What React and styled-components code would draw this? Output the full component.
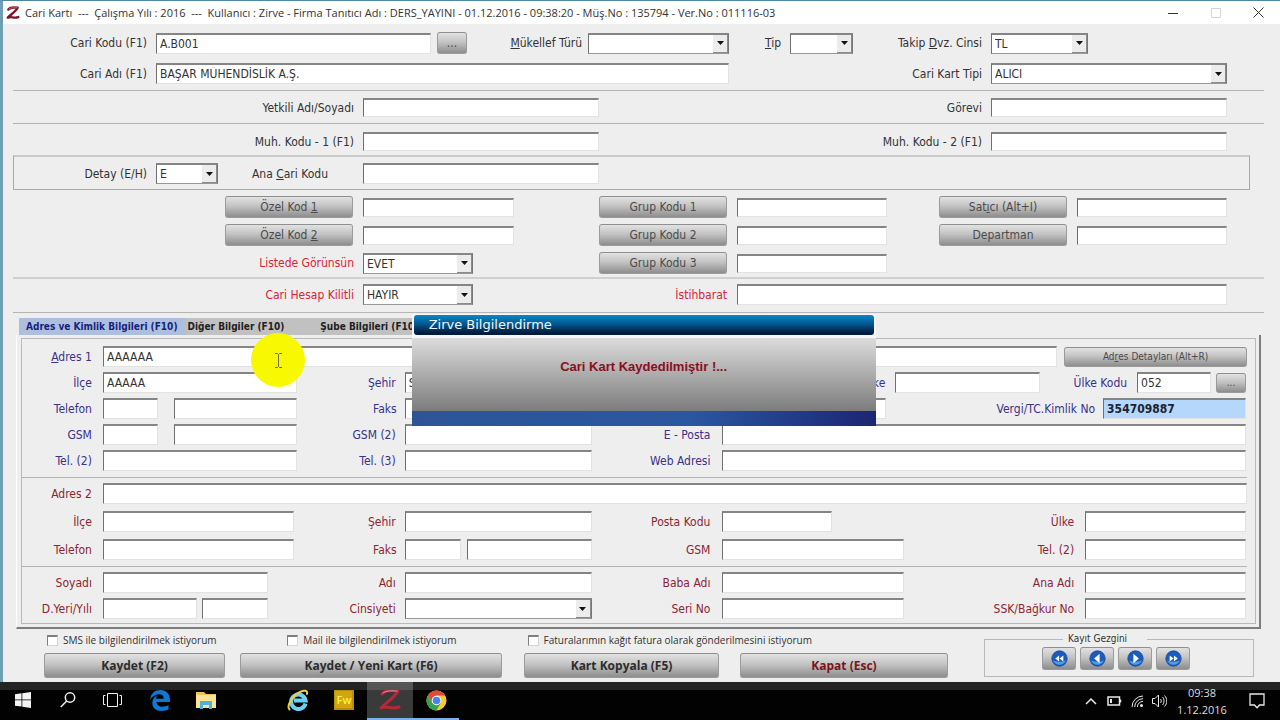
import React, { useId } from 'react';
import styled, { createGlobalStyle, css } from 'styled-components';

const GlobalStyle = createGlobalStyle`
  :root {
    --c-face: #eeeeee;
    --c-shade: #858585;
    --c-rule: #b4b4b4;
    --c-text: #333333;
    --c-navy: #3a3188;
    --c-maroon: #8c2533;
    --c-red: #d8233a;
    --f-form: 'DejaVu Sans Condensed', 'Noto Sans', sans-serif;
    --f-ui: 'Open Sans', 'Noto Sans', sans-serif;
  }

  * {
    box-sizing: border-box;
  }

  body {
    margin: 0;
    background: #000;
    font-family: var(--f-form);
    font-size: 12px;
    line-height: 16px;
    color: var(--c-text);
  }

  button, input, select {
    font-family: inherit;
    font-size: inherit;
    color: inherit;
    margin: 0;
    padding: 0;
    min-width: 0;
    border-radius: 0;
  }
`

const Desktop = styled.div`
  display: flex;
  flex-direction: column;
  min-height: 100vh;
`

// ---- window frame

const Window = styled.main`
  position: relative;
  flex: 1;
  background: var(--c-face);
  border-top: 1px solid #4f86a3;
  border-left: 3px solid #6d9fb5;
`

const TitleBar = styled.header`
  display: flex;
  align-items: center;
  height: 23px;
  padding-left: 3px;
  background: #fff;
`

const TitleText = styled.h1`
  flex: 1;
  margin: 0;
  padding-left: 5px;
  font-family: var(--f-ui);
  font-size: 11px;
  font-weight: 400;
  white-space: pre;
`

const WindowButton = styled.button`
  display: flex;
  align-items: center;
  justify-content: center;
  width: 43px;
  height: 22px;
  border: none;
  background: transparent;
  color: ${props => props.disabled ? '#d4d4d4' : '#333'};
`

// ---- form parts

const Form = styled.form`
  display: flex;
  flex-direction: column;
`

// label / control columns, given as fr so that the form grows with the window
const Row = styled.div`
  display: grid;
  grid-template-columns: ${props => props.$cols.map(col => `minmax(0, ${col}fr)`).join(' ')};
  align-items: center;
  min-height: ${props => props.$tall ? 22 : 21}px;
`

const Rule = styled.hr`
  width: auto;
  height: ${props => props.$thick ? 2 : 1}px;
  margin: ${props => props.$inner ? '6px 8px 5px 0' : '0 16px 0 10px'};
  border: none;
  background: ${props => props.$thick ? '#d0d0d0' : 'var(--c-rule)'};
`

const Stack = styled.div`
  display: flex;
  flex-direction: column;
  gap: ${props => props.$gap}px;
  padding: ${props => props.$pad || 0};
`

const tones = {
  navy: 'var(--c-navy)',
  maroon: 'var(--c-maroon)',
  red: 'var(--c-red)',
}

const Label = styled.label`
  padding-right: ${props => props.$pad || 9}px;
  color: ${props => tones[props.$tone] || 'inherit'};
  text-align: right;
  white-space: nowrap;
`

const sunken = css`
  border: solid;
  border-width: 2px 1px 1px 1px;
  border-color: var(--c-shade) #e2e2e2 #e2e2e2 #6f6f6f;
`

const TextBox = styled.input`
  ${sunken}
  width: 100%;
  height: ${props => props.$low ? 19 : 21}px;
  padding: 0 3px;
  background: ${props => props.$selected ? '#b4d7fb' : '#fff'};
  font-weight: ${props => props.$selected ? 700 : 400};
  color: ${props => props.$selected ? '#1c2430' : 'inherit'};
  outline: none;
`

const SelectFrame = styled.span`
  ${sunken}
  display: grid;
  grid-template-columns: minmax(0, 1fr) 15px;
  height: 21px;
  border-right-color: #777;
  border-bottom-color: #999;
  background: #fff;
`

const NativeSelect = styled.select`
  appearance: none;
  grid-area: 1 / 1 / 2 / 3;
  border: none;
  padding-left: 3px;
  background: transparent;
  outline: none;
`

const SelectArrow = styled.span`
  grid-area: 1 / 2 / 2 / 3;
  display: flex;
  align-items: center;
  justify-content: center;
  border: solid;
  border-width: 0 1px 1px 0;
  border-color: #8a8a8a;
  background: #ececec;
  pointer-events: none;
`

const Pair = styled.span`
  display: grid;
  grid-template-columns: ${props => props.$cols.map(col => `minmax(0, ${col}fr)`).join(' ')};
  gap: ${props => props.$gap}px;
`

const StyledButton = styled.button`
  display: flex;
  justify-content: center;
  align-items: center;
  width: ${props => props.$width || '100%'};
  height: ${props => props.$height || 22}px;
  border: 1px solid #9b9b9b;
  border-top-color: #8f8f8f;
  border-radius: 3px;
  background: linear-gradient(#e2e2e2, #c3c3c3 45%, #8d8d8d);
  color: #4b4b4b;
  font-size: ${props => props.$small ? 10 : 12}px;
  white-space: nowrap;

  &:active {
    background: linear-gradient(#8d8d8d, #c3c3c3);
  }
`

const ButtonCell = styled.span`
  display: flex;
  justify-content: flex-end;
  padding-right: ${props => props.$pad || 0}px;
  padding-left: ${props => props.$lead || 0}px;
`

const DetailPanel = styled.section`
  margin: 3px 30px 0 10px;
  padding: 6px 0 5px;
  border: 1px solid #a8a8a8;
  border-top: 2px solid #cacaca;
`

// ---- tabs

const TabList = styled.div`
  display: flex;
  height: 17px;
  margin: 5px 0 0 16px;
`

const Tab = styled.button`
  height: 17px;
  padding: ${props => props.$pad};
  border: none;
  background: ${props => props.$active ? '#aebfdd' : '#c1c1c1'};
  color: ${props => props.$active ? '#14247e' : '#222'};
  font-size: 10px;
  font-weight: 700;
  line-height: 17px;
  white-space: nowrap;
`

const TabPanel = styled.section`
  margin: 0 19px 0 13px;
  padding: 3px 3px 3px 4px;
  border: solid;
  border-width: 0 2px 2px 1px;
  border-color: #fff #7d7d7d #7d7d7d #fff;
`

const TabPanelInner = styled.div`
  padding: 7px 0 4px;
  border: 1px solid #b9b9b9;
`

// ---- bottom area

const Footer = styled.footer`
  display: grid;
  grid-template-columns: minmax(0, 981fr) minmax(0, 270fr) minmax(0, 26fr);
  align-items: start;
  padding: 2px 0 3px;
`

const Checks = styled.div`
  display: grid;
  grid-template-columns: repeat(2, minmax(0, 240fr)) minmax(0, 456fr);
  padding-left: 44px;
`

const CheckLabel = styled.label`
  display: flex;
  align-items: center;
  gap: 5px;
  height: 18px;
  font-family: var(--f-ui);
  font-size: 10px;
  white-space: nowrap;
`

const CheckBox = styled.input`
  appearance: none;
  width: 11px;
  height: 11px;
  border: solid #7e7e7e;
  border-width: 2px 1px 1px 1px;
  border-right-color: #d5d5d5;
  border-bottom-color: #d5d5d5;
  background: #fff;

  &:checked {
    background: #444;
  }
`

const Actions = styled.div`
  display: grid;
  grid-template-columns: 181fr 15fr 262fr 22fr 195fr 21fr 208fr 36fr;
  padding: 4px 0 0 41px;
`

const ActionButton = styled(StyledButton)`
  grid-column: ${props => props.$col};
  height: 25px;
  color: ${props => props.$tone ? '#7c1420' : '#2d2d2d'};
  font-family: var(--f-ui);
  font-weight: 700;
`

const Navigator = styled.fieldset`
  display: flex;
  justify-content: center;
  height: 46px;
  margin: 0;
  padding: 0 6px 0 0;
  border: 1px solid #b9b9b9;
  min-width: 0;
`

const NavLegend = styled.legend`
  margin-left: 78px;
  padding: 0 20px 0 5px;
  font-size: 10px;
  line-height: 16px;
`

const NavButtons = styled.div`
  display: flex;
  gap: 4px;
`

// ---- message box

const Dialog = styled.section`
  position: absolute;
  top: 313px;
  left: 32%;
  width: 464px;
  background: #f6f6f6;
`

const DialogTitle = styled.h2`
  height: 20px;
  margin: 1px 2px 3px;
  padding-left: 15px;
  border-radius: 3px;
  background: linear-gradient(#0a86cb, #04588f 45%, #021a3c 90%);
  color: #f2f8fc;
  font-family: 'DejaVu Sans', sans-serif;
  font-size: 13px;
  font-weight: 400;
  line-height: 20px;
`

const DialogBody = styled.p`
  height: 73px;
  margin: 0;
  padding-top: 21px;
  background: linear-gradient(#dcdcdc, #7c7c7c);
  color: #8a0f1c;
  font-family: 'Liberation Sans', sans-serif;
  font-size: 13px;
  font-weight: 700;
  text-align: center;
`

const DialogFoot = styled.div`
  height: 15px;
  background: linear-gradient(90deg, #2d5596, #2b57a0 60%, #1b2673);
`

const PointerHalo = styled.div`
  position: absolute;
  top: 332px;
  left: 248px;
  display: flex;
  align-items: center;
  justify-content: center;
  width: 54px;
  height: 54px;
  border-radius: 50%;
  background: #f8f803;
  pointer-events: none;
`

// ---- taskbar

const TaskBar = styled.nav`
  display: flex;
  height: 38px;
  background: linear-gradient(#242424 8px, #020202 8px);
`

const TaskButton = styled.button`
  display: flex;
  align-items: center;
  justify-content: center;
  width: ${props => props.$width || 46}px;
  margin-right: ${props => props.$after || 0}px;
  border: none;
  border-bottom: 2px solid ${props => props.$running ? '#78b2ec' : 'transparent'};
  background: ${props => props.$active ? 'linear-gradient(#555 8px, #3a3a3a 8px)' : 'transparent'};
  background-clip: padding-box;
`

const Tray = styled.div`
  display: flex;
  align-items: center;
  margin-left: auto;
  color: #e8e8e8;
`

const TrayButton = styled.button`
  display: flex;
  align-items: center;
  justify-content: center;
  width: ${props => props.$width || 22}px;
  height: 36px;
  border: none;
  background: transparent;
`

const Clock = styled.time`
  display: flex;
  flex-direction: column;
  align-items: center;
  width: 64px;
  color: #dedede;
  font-family: var(--f-ui);
  font-size: 11px;
  line-height: 17px;
`

// ---- composed fields

const Field = ({ label, tone, pad, ...rest }) => {
  const id = useId()
  return (
    <>
      <Label htmlFor={id} $tone={tone} $pad={pad}>{label}</Label>
      <TextBox id={id} type='text' {...rest} />
    </>
  )
}

const PairField = ({ label, tone, pad, cols, gap, name }) => {
  const id = useId()
  return (
    <>
      <Label htmlFor={id} $tone={tone} $pad={pad}>{label}</Label>
      <Pair $cols={cols} $gap={gap}>
        <TextBox id={id} type='text' />
        <TextBox type='text' aria-label={name} />
      </Pair>
    </>
  )
}

const SelectField = ({ label, tone, pad, value = '' }) => {
  const id = useId()
  return (
    <>
      <Label htmlFor={id} $tone={tone} $pad={pad}>{label}</Label>
      <SelectFrame>
        <NativeSelect id={id} defaultValue={value}>
          <option value={value}>{value}</option>
        </NativeSelect>
        <SelectArrow>
          <svg width='7' height='4' viewBox='0 0 7 4'><path d='M0 0h7L3.500 4z' fill='#111' /></svg>
        </SelectArrow>
      </SelectFrame>
    </>
  )
}

const CodeField = ({ children, name }) => (
  <>
    <ButtonCell $pad={10}>
      <StyledButton type='button' $width='128px'>{children}</StyledButton>
    </ButtonCell>
    <TextBox type='text' aria-label={name} $low />
  </>
)

const Check = ({ children }) => (
  <CheckLabel>
    <CheckBox type='checkbox' />
    {children}
  </CheckLabel>
)

// ---- icons

const ZirveMark = ({ size, color, weight = 3 }) => (
  <svg width={size} height={size} viewBox='0 0 24 24' fill='none' stroke={color} strokeLinejoin='round' strokeLinecap='round'>
    <path d='M4 6c3-4 9-4 16-3C17 9 9 14 3 20c6-3 11 2 18-1' strokeWidth={weight} />
    <path d='M5 5c4-3 9-2 14-2' stroke='#e9b9bf' strokeWidth='0.8' />
  </svg>
)

const navPaths = {
  first: 'M9.500 6.500v7L5 10zM14.500 6.500v7L10 10z',
  prev: 'M12.500 4.500v11L6 10z',
  next: 'M7.500 4.500v11L14 10z',
  last: 'M5.500 6.500v7L10 10zM10.500 6.500v7L15 10z',
}

const NavButton = ({ kind, name }) => (
  <StyledButton type='button' $width='34px' $height={23} aria-label={name}>
    <svg width='17' height='17' viewBox='0 0 20 20'>
      <circle cx='10' cy='10' r='9' fill='#1a5cbd' stroke='#16489a' />
      <path d='M2.500 12a8 8 0 0 0 15 0c-4 2.500-11 2.500-15 0z' fill='#4f9fe8' />
      <path d={navPaths[kind]} fill='#fff' />
    </svg>
  </StyledButton>
)

const EdgeIcon = () => (
  <svg width='20' height='21' viewBox='0 0 20 21'>
    <path fill='#0f78d7' d='M0 9.500C1 3 5 0 10.500 0 16.500 0 20 4.500 20 9.500V12H6.500c.2 3.200 3 4.700 6 4.700 2.300 0 4.400-.6 6-1.700v4.300c-2 1.200-4.500 1.700-7 1.700C6 21 2.300 17.800 2.300 13c0-3.300 1.900-6.100 5-7.500-.8.9-1.100 2-1.200 3.200h7.600c0-2.900-1.500-4.400-4.400-4.400C5.700 4.300 2.300 6.300 0 9.500z' />
  </svg>
)

const FolderIcon = () => (
  <svg width='20' height='18' viewBox='0 0 20 18'>
    <path fill='#e8c55f' d='M0 1h8l2 2h10v14H0z' />
    <path fill='#fbe394' d='M0 4h20v13H0z' />
    <path fill='#4eb3d8' d='M4 10h12v8h-3v-4H7v4H4z' />
  </svg>
)

const ExplorerIcon = () => (
  <svg width='22' height='22' viewBox='0 0 22 22' fill='none'>
    <path d='M18.500 14.500A7.300 7.300 0 1 1 18.600 11.500H7' stroke='#6fd0f6' strokeWidth='4' />
    <path d='M2.500 20.500C-1 17 6 6 13 3c4-2 8-2 7 2' stroke='#f4ce3a' strokeWidth='2' strokeLinecap='round' />
  </svg>
)

const FireworksIcon = () => (
  <svg width='20' height='20' viewBox='0 0 20 20'>
    <rect width='20' height='20' fill='#b88d0a' />
    <rect x='1' y='1' width='17' height='17' fill='#d0a50f' />
    <text x='10' y='14' textAnchor='middle' fontFamily='Open Sans, sans-serif' fontSize='11' fontWeight='600' fill='#fff04a'>Fw</text>
  </svg>
)

const ChromeIcon = () => (
  <svg width='21' height='21' viewBox='0 0 22 22'>
    <circle cx='11' cy='11' r='10.500' fill='#fbc82f' />
    <path d='M1.900 5.700A10.500 10.500 0 0 1 20.100 5.800H11L6.500 13.600z' fill='#dd4b3e' />
    <path d='M1.900 5.700 6.500 13.600 11 16l4.500-2.400L10.800 21.500A10.500 10.500 0 0 1 1.900 5.700z' fill='#32a350' />
    <circle cx='11' cy='11' r='5' fill='#fff' />
    <circle cx='11' cy='11' r='4' fill='#4a82ee' />
  </svg>
)

export default function App() {
  return (
    <Desktop>
      <GlobalStyle />
      <Window>
        <TitleBar>
          <ZirveMark size={14} color='#7d1226' weight={4} />
          <TitleText>{'Cari Kartı  ---  Çalışma Yılı : 2016  ---  Kullanıcı : Zirve - Firma Tanıtıcı Adı : DERS_YAYINI - 01.12.2016 - 09:38:20 - Müş.No : 135794 - Ver.No : 011116-03'}</TitleText>
          <WindowButton type='button' aria-label='Simge durumuna küçült'>
            <svg width='10' height='10' stroke='currentColor'><path d='M0 5.500h10' /></svg>
          </WindowButton>
          <WindowButton type='button' aria-label='Ekranı kapla' disabled>
            <svg width='10' height='10' fill='none' stroke='currentColor'><path d='M.5.5h9v9h-9z' /></svg>
          </WindowButton>
          <WindowButton type='button' aria-label='Pencereyi kapat'>
            <svg width='11' height='11' stroke='currentColor'><path d='m.5.5 10 10m0-10-10 10' /></svg>
          </WindowButton>
        </TitleBar>

        <Form>
          <Stack $gap={9} $pad='8px 0 6px'>
            <Row $cols={[153, 275, 36, 121, 141, 61, 63, 138, 97, 192]}>
              <Field label='Cari Kodu (F1)' defaultValue='A.B001' />
              <ButtonCell $lead={6}><StyledButton type='button'>...</StyledButton></ButtonCell>
              <SelectField label={<><u>M</u>ükellef Türü</>} pad={6} />
              <SelectField label={<><u>T</u>ip</>} />
              <SelectField label={<>Takip <u>D</u>vz. Cinsi</>} value='TL' />
            </Row>
            <Row $cols={[153, 573, 262, 236, 53]}>
              <Field label='Cari Adı (F1)' defaultValue='BAŞAR MÜHENDİSLİK A.Ş.' />
              <SelectField label='Cari Kart Tipi' value='ALICI' />
            </Row>
          </Stack>
          <Rule />
          <Stack $gap={0} $pad='6px 0 5px'>
            <Row $cols={[360, 236, 392, 236, 53]}>
              <Field label='Yetkili Adı/Soyadı' $low />
              <Field label='Görevi' $low />
            </Row>
          </Stack>
          <Rule />
          <Stack $gap={0} $pad='7px 0 0'>
            <Row $cols={[360, 236, 392, 236, 53]}>
              <Field label='Muh. Kodu - 1 (F1)' $low />
              <Field label='Muh. Kodu - 2 (F1)' $low />
            </Row>
          </Stack>
          <DetailPanel>
            <Row $cols={[142, 62, 145, 236, 650]}>
              <SelectField label='Detay (E/H)' value='E' />
              <Field label={<>Ana <u>C</u>ari Kodu</>} pad={35} />
            </Row>
          </DetailPanel>

          <Stack $gap={6} $pad='6px 0 3px'>
            <Row $tall $cols={[360, 151, 223, 150, 190, 150, 53]}>
              <CodeField name='Özel Kod 1'>Özel Kod&nbsp;<u>1</u></CodeField>
              <CodeField name='Grup Kodu 1'>Grup Kodu 1</CodeField>
              <CodeField name='Satıcı'>Sat<u>ı</u>cı (Alt+I)</CodeField>
            </Row>
            <Row $tall $cols={[360, 151, 223, 150, 190, 150, 53]}>
              <CodeField name='Özel Kod 2'>Özel Kod&nbsp;<u>2</u></CodeField>
              <CodeField name='Grup Kodu 2'>Grup Kodu 2</CodeField>
              <CodeField name='Departman'>Departman</CodeField>
            </Row>
            <Row $tall $cols={[360, 110, 264, 150, 393]}>
              <SelectField label='Listede Görünsün' tone='red' value='EVET' />
              <CodeField name='Grup Kodu 3'>Grup Kodu 3</CodeField>
            </Row>
          </Stack>
          <Rule $thick />
          <Stack $gap={0} $pad='5px 0 7px'>
            <Row $cols={[360, 110, 264, 490, 53]}>
              <SelectField label='Cari Hesap Kilitli' tone='red' value='HAYIR' />
              <Field label='İstihbarat' tone='red' pad={10} />
            </Row>
          </Stack>
          <Rule />

          <TabList role='tablist'>
            <Tab type='button' role='tab' aria-selected='true' $active $pad='0 8px 0 7px'>Adres ve Kimlik Bilgileri (F10)</Tab>
            <Tab type='button' role='tab' aria-selected='false' $pad='0 18px 0 2px'>Diğer Bilgiler (F10)</Tab>
            <Tab type='button' role='tab' aria-selected='false' $pad='0 8px 0 18px'>Şube Bilgileri (F10)</Tab>
          </TabList>
          <TabPanel>
            <TabPanelInner>
              <Stack $gap={5}>
                <Row $cols={[81, 955, 190, 8]}>
                  <Field label={<><u>A</u>dres 1</>} tone='navy' pad={11} defaultValue='AAAAAA' />
                  <ButtonCell $lead={7}><StyledButton type='button' $height={20} $small>Ad<u>r</u>es Detayları (Alt+R)</StyledButton></ButtonCell>
                </Row>
                <Row $cols={[81, 194, 108, 187, 131, 112, 61, 145, 97, 74, 35, 9]}>
                  <Field label='İlçe' tone='navy' pad={11} defaultValue='AAAAA' />
                  <Field label='Şehir' tone='navy' defaultValue='S' />
                  <Field label='Posta Kodu' tone='navy' pad={12} />
                  <Field label='Ülke' tone='navy' pad={10} />
                  <Field label='Ülke Kodu' tone='navy' pad={10} defaultValue='052' />
                  <ButtonCell $lead={5}><StyledButton type='button' $height={20} $small>...</StyledButton></ButtonCell>
                </Row>
                <Row $cols={[81, 194, 108, 187, 131, 164, 217, 143, 9]}>
                  <PairField label='Telefon' tone='navy' pad={11} cols={[55, 123]} gap={16} name='Telefon numarası' />
                  <PairField label='Faks' tone='navy' pad={8} cols={[55, 125]} gap={7} name='Faks numarası' />
                  <Field label='Vergi Dairesi' tone='navy' pad={12} />
                  <Field label='Vergi/TC.Kimlik No' tone='navy' pad={8} defaultValue='354709887' $selected />
                </Row>
                <Row $cols={[81, 194, 108, 187, 131, 524, 9]}>
                  <PairField label='GSM' tone='navy' pad={11} cols={[55, 123]} gap={16} name='GSM numarası' />
                  <Field label='GSM (2)' tone='navy' />
                  <Field label='E - Posta' tone='navy' pad={12} />
                </Row>
                <Row $cols={[81, 194, 108, 187, 131, 524, 9]}>
                  <Field label='Tel. (2)' tone='navy' pad={11} />
                  <Field label='Tel. (3)' tone='navy' />
                  <Field label='Web Adresi' tone='navy' pad={12} />
                </Row>
              </Stack>
              <Rule $inner />
              <Stack $gap={7}>
                <Row $cols={[81, 1145, 8]}>
                  <Field label='Adres 2' tone='maroon' pad={11} />
                </Row>
                <Row $cols={[81, 191, 111, 187, 131, 110, 253, 161, 9]}>
                  <Field label='İlçe' tone='maroon' pad={11} />
                  <Field label='Şehir' tone='maroon' />
                  <Field label='Posta Kodu' tone='maroon' pad={12} />
                  <Field label='Ülke' tone='maroon' pad={11} />
                </Row>
                <Row $cols={[81, 191, 111, 187, 131, 182, 181, 161, 9]}>
                  <Field label='Telefon' tone='maroon' pad={11} />
                  <PairField label='Faks' tone='maroon' pad={8} cols={[56, 125]} gap={6} name='Faks numarası 2' />
                  <Field label='GSM' tone='maroon' pad={12} />
                  <Field label='Tel. (2)' tone='maroon' pad={11} />
                </Row>
              </Stack>
              <Rule $inner />
              <Stack $gap={5}>
                <Row $cols={[81, 165, 137, 187, 131, 182, 181, 161, 9]}>
                  <Field label='Soyadı' tone='maroon' pad={11} />
                  <Field label='Adı' tone='maroon' />
                  <Field label='Baba Adı' tone='maroon' pad={12} />
                  <Field label='Ana Adı' tone='maroon' pad={11} />
                </Row>
                <Row $cols={[81, 165, 137, 187, 131, 182, 181, 161, 9]}>
                  <PairField label='D.Yeri/Yılı' tone='maroon' pad={11} cols={[94, 66]} gap={5} name='Doğum yılı' />
                  <SelectField label='Cinsiyeti' tone='maroon' />
                  <Field label='Seri No' tone='maroon' pad={12} />
                  <Field label='SSK/Bağkur No' tone='maroon' pad={11} />
                </Row>
              </Stack>
            </TabPanelInner>
          </TabPanel>

          <Footer>
            <div>
              <Checks>
                <Check>SMS ile bilgilendirilmek istiyorum</Check>
                <Check>Mail ile bilgilendirilmek istiyorum</Check>
                <Check>Faturalarımın kağıt fatura olarak gönderilmesini istiyorum</Check>
              </Checks>
              <Actions>
                <ActionButton type='button' $col={1}>Kaydet (F2)</ActionButton>
                <ActionButton type='button' $col={3}>Kaydet / Yeni Kart (F6)</ActionButton>
                <ActionButton type='button' $col={5}>Kart Kopyala (F5)</ActionButton>
                <ActionButton type='button' $col={7} $tone='maroon'>Kapat (Esc)</ActionButton>
              </Actions>
            </div>
            <Navigator>
              <NavLegend>Kayıt Gezgini</NavLegend>
              <NavButtons>
                <NavButton kind='first' name='İlk kayıt' />
                <NavButton kind='prev' name='Önceki kayıt' />
                <NavButton kind='next' name='Sonraki kayıt' />
                <NavButton kind='last' name='Son kayıt' />
              </NavButtons>
            </Navigator>
          </Footer>
        </Form>

        <PointerHalo>
          <svg width='9' height='15' viewBox='0 0 9 15' fill='none' stroke='#6b6b45'>
            <path d='M1 .5h2.500l1 1 1-1H8M1 14.500h2.500l1-1 1 1H8M4.500 1.500v12' />
          </svg>
        </PointerHalo>

        <Dialog role='alertdialog' aria-label='Zirve Bilgilendirme'>
          <DialogTitle>Zirve Bilgilendirme</DialogTitle>
          <DialogBody>Cari Kart Kaydedilmiştir !...</DialogBody>
          <DialogFoot />
        </Dialog>
      </Window>

      <TaskBar>
        <TaskButton $width={45} aria-label='Başlat'>
          <svg width='16' height='16' viewBox='0 0 16 16' fill='#f4f4f4'><path d='M0 2.200 6.500 1.300v6.200H0zM7.300 1.200 16 0v7.500H7.300zM0 8.300h6.500v6.300L0 13.700zM7.300 8.300H16V16l-8.700-1.300z' /></svg>
        </TaskButton>
        <TaskButton $width={45} aria-label='Ara'>
          <svg width='16' height='16' viewBox='0 0 16 16' fill='none' stroke='#f0f0f0' strokeWidth='1.500'><circle cx='10' cy='5.500' r='4.700' /><path d='M6.700 9 .8 15' /></svg>
        </TaskButton>
        <TaskButton $width={45} $after={2} aria-label='Görev görünümü'>
          <svg width='19' height='14' viewBox='0 0 19 14' fill='none' stroke='#f0f0f0'><path d='M4.500.5h10v13h-10zM2.500 2.500h-2v9h2M16.500 2.500h2v9h-2' /></svg>
        </TaskButton>
        <TaskButton aria-label='Edge'><EdgeIcon /></TaskButton>
        <TaskButton $after={46} aria-label='Dosya Gezgini'><FolderIcon /></TaskButton>
        <TaskButton aria-label='Internet Explorer'><ExplorerIcon /></TaskButton>
        <TaskButton aria-label='Fireworks'><FireworksIcon /></TaskButton>
        <TaskButton $active $running aria-label='Zirve'><ZirveMark size={24} color='#b5283a' /></TaskButton>
        <TaskButton $running aria-label='Chrome'><ChromeIcon /></TaskButton>
        <Tray>
          <TrayButton aria-label='Gizli simgeler'>
            <svg width='12' height='8' fill='none' stroke='currentColor' strokeWidth='1.500'><path d='m1 7 5-5 5 5' /></svg>
          </TrayButton>
          <TrayButton $width={24} aria-label='Pil'>
            <svg width='15' height='10' fill='none' stroke='currentColor'><path d='M1 1h11.500v8H1zM13.500 3.500v3' strokeWidth='1.500' /><path d='M3 3h2v4H3z' fill='currentColor' stroke='none' /></svg>
          </TrayButton>
          <TrayButton aria-label='Ağ'>
            <svg width='13' height='13' viewBox='0 0 13 13' fill='none' stroke='currentColor'><path d='M1 12A11 11 0 0 1 12 1M3.700 12A8.300 8.300 0 0 1 12 3.700M6.400 12A5.600 5.600 0 0 1 12 6.400' /><circle cx='10.500' cy='10.500' r='1.500' fill='currentColor' stroke='none' /></svg>
          </TrayButton>
          <TrayButton aria-label='Ses'>
            <svg width='15' height='14' viewBox='0 0 15 14' fill='none' stroke='currentColor'><path d='M.5 4.500H3L6.500 1v12L3 9.500H.5zM8.500 5c1 1 1 3 0 4M10.500 3c2 2 2 6 0 8M12.500 1.500c3 3 3 8 0 11' /></svg>
          </TrayButton>
          <Clock>
            <span>09:38</span>
            <span>1.12.2016</span>
          </Clock>
          <TrayButton $width={46} aria-label='Bildirimler'>
            <svg width='16' height='16' viewBox='0 0 16 16' fill='none' stroke='currentColor' strokeWidth='1.300'><path d='M1 1h14v11h-4.500L8 14.800 5.500 12H1z' /></svg>
          </TrayButton>
        </Tray>
      </TaskBar>
    </Desktop>
  )
}
